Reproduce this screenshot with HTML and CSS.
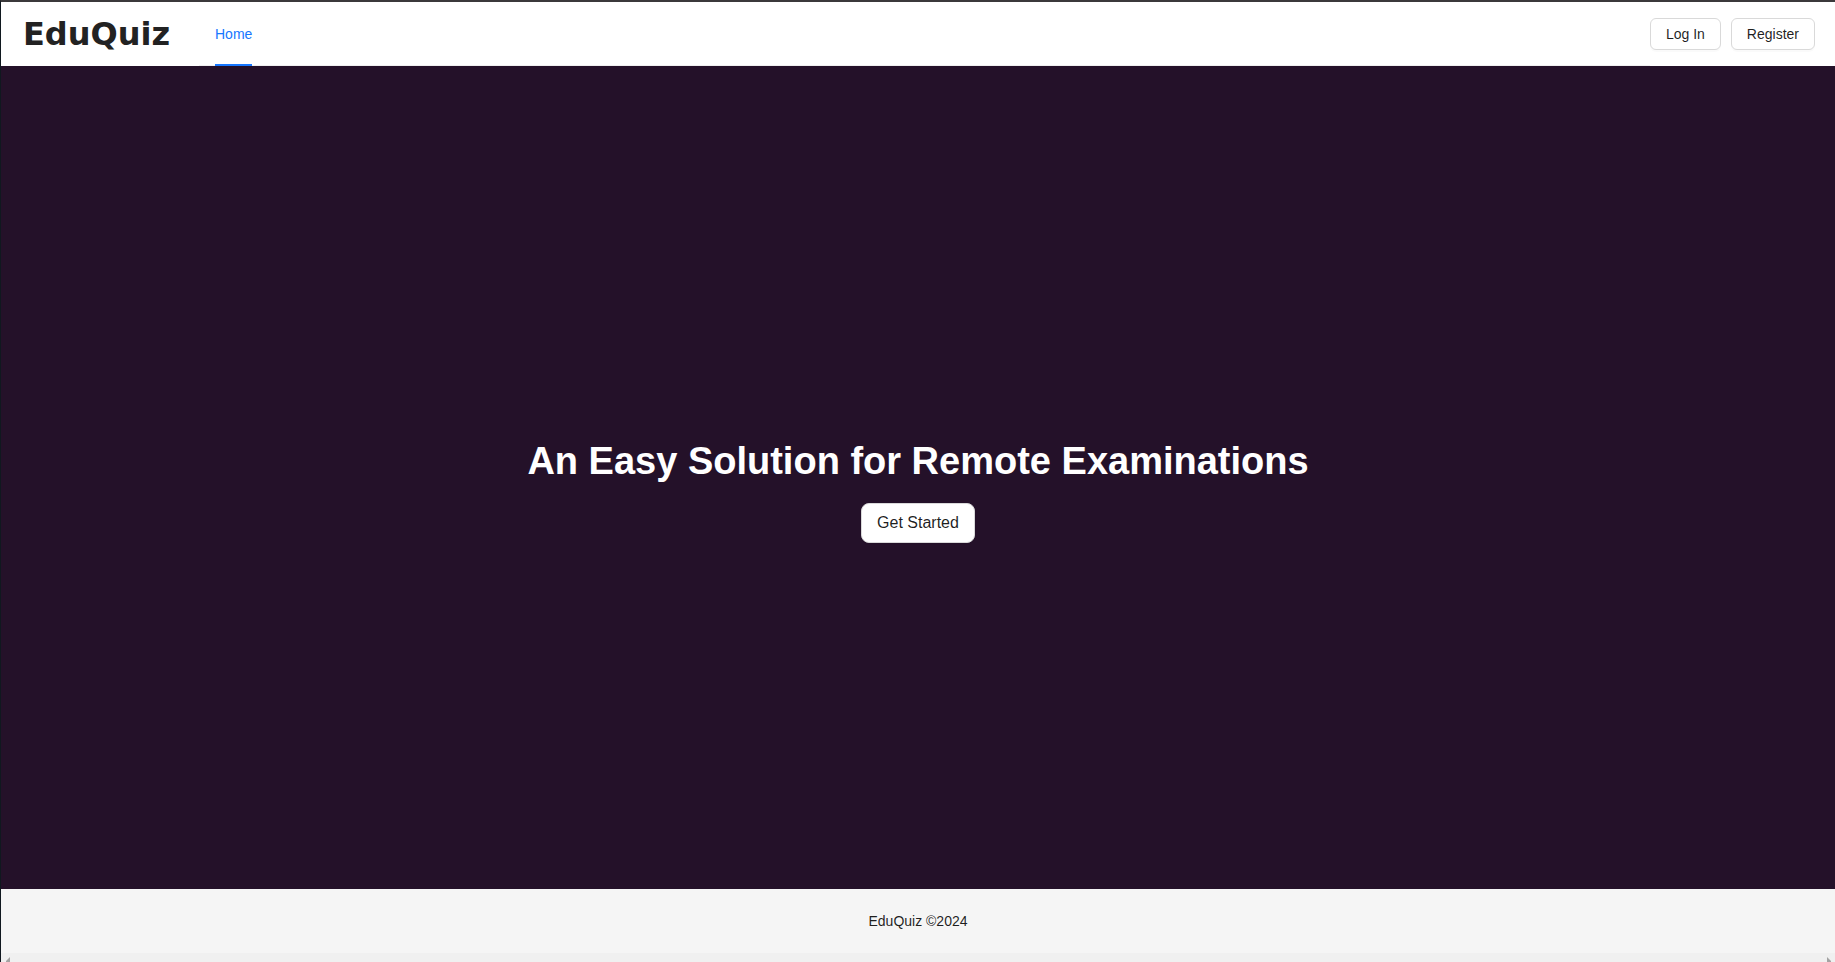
FILE: index.html
```html
<!DOCTYPE html>
<html lang="en">
<head>
<meta charset="utf-8">
<title>EduQuiz</title>
<link rel="stylesheet" href="styles.css">
</head>
<body>
<div class="page">
  <header class="header">
    <a class="logo" href="#">EduQuiz</a>
    <nav class="menu"><a class="menu-item" href="#">Home</a></nav>
    <div class="actions">
      <button class="btn" type="button">Log In</button>
      <button class="btn" type="button">Register</button>
    </div>
  </header>
  <main class="hero">
    <h1 class="hero-title">An Easy Solution for Remote Examinations</h1>
    <button class="btn btn-large" type="button">Get Started</button>
  </main>
  <footer class="footer">EduQuiz ©2024</footer>
  <div class="scroll-track">
    <svg width="4" height="5" viewBox="0 0 4 5"><path d="M4 0v5H0V4z" fill="#a3a3a3"/></svg>
    <svg width="4" height="5" viewBox="0 0 4 5"><path d="M0 0v5h4V4z" fill="#a3a3a3"/></svg>
  </div>
</div>
</body>
</html>
```
FILE: styles.css
```css
* {
  box-sizing: border-box;
}

body {
  margin: 0;
  font-family: "Liberation Sans", Arial, sans-serif;
  font-size: 14px;
  color: rgba(0, 0, 0, 0.88);
}

.page {
  display: flex;
  flex-direction: column;
  min-height: 100vh;
  border-top: 2px solid #3b393b;
  border-left: 1px solid #10181f;
}

.header {
  display: flex;
  align-items: center;
  height: 64px;
  padding: 0 20px 0 22px;
  background: #fff;
}

.logo {
  width: 176px;
  font-family: "DejaVu Sans", sans-serif;
  font-size: 32px;
  font-weight: bold;
  line-height: 40px;
  color: #222;
  text-decoration: none;
}

.menu {
  display: flex;
  flex: 1;
  align-self: stretch;
  padding: 0 16px;
  box-shadow: inset 0 -1px #f0f0f0;
}

.menu-item {
  line-height: 64px;
  color: #1677ff;
  text-decoration: none;
  box-shadow: inset 0 -2px #1677ff;
}

.actions {
  display: flex;
  gap: 10px;
  align-self: stretch;
  align-items: center;
}

.btn {
  height: 32px;
  padding: 0 15px;
  border: 1px solid #d9d9d9;
  border-radius: 6px;
  background: #fff;
  box-shadow: 0 2px 0 rgba(0, 0, 0, 0.02);
  font: inherit;
  color: inherit;
  cursor: pointer;
}

.btn-large {
  height: 40px;
  border-radius: 8px;
  font-size: 16px;
}

.hero {
  display: flex;
  flex: 1;
  flex-direction: column;
  align-items: center;
  justify-content: center;
  background: #241129;
}

.hero-title {
  margin: 25px 0 19px;
  font-size: 38px;
  line-height: 46px;
  color: #fff;
}

.footer {
  height: 64px;
  padding: 24px 50px;
  background: #f5f5f5;
  line-height: 16px;
  text-align: center;
}

.scroll-track {
  display: flex;
  align-items: flex-end;
  justify-content: space-between;
  height: 9px;
  padding: 0 4px 0 5px;
  background: #f0f0f0;
}
```
